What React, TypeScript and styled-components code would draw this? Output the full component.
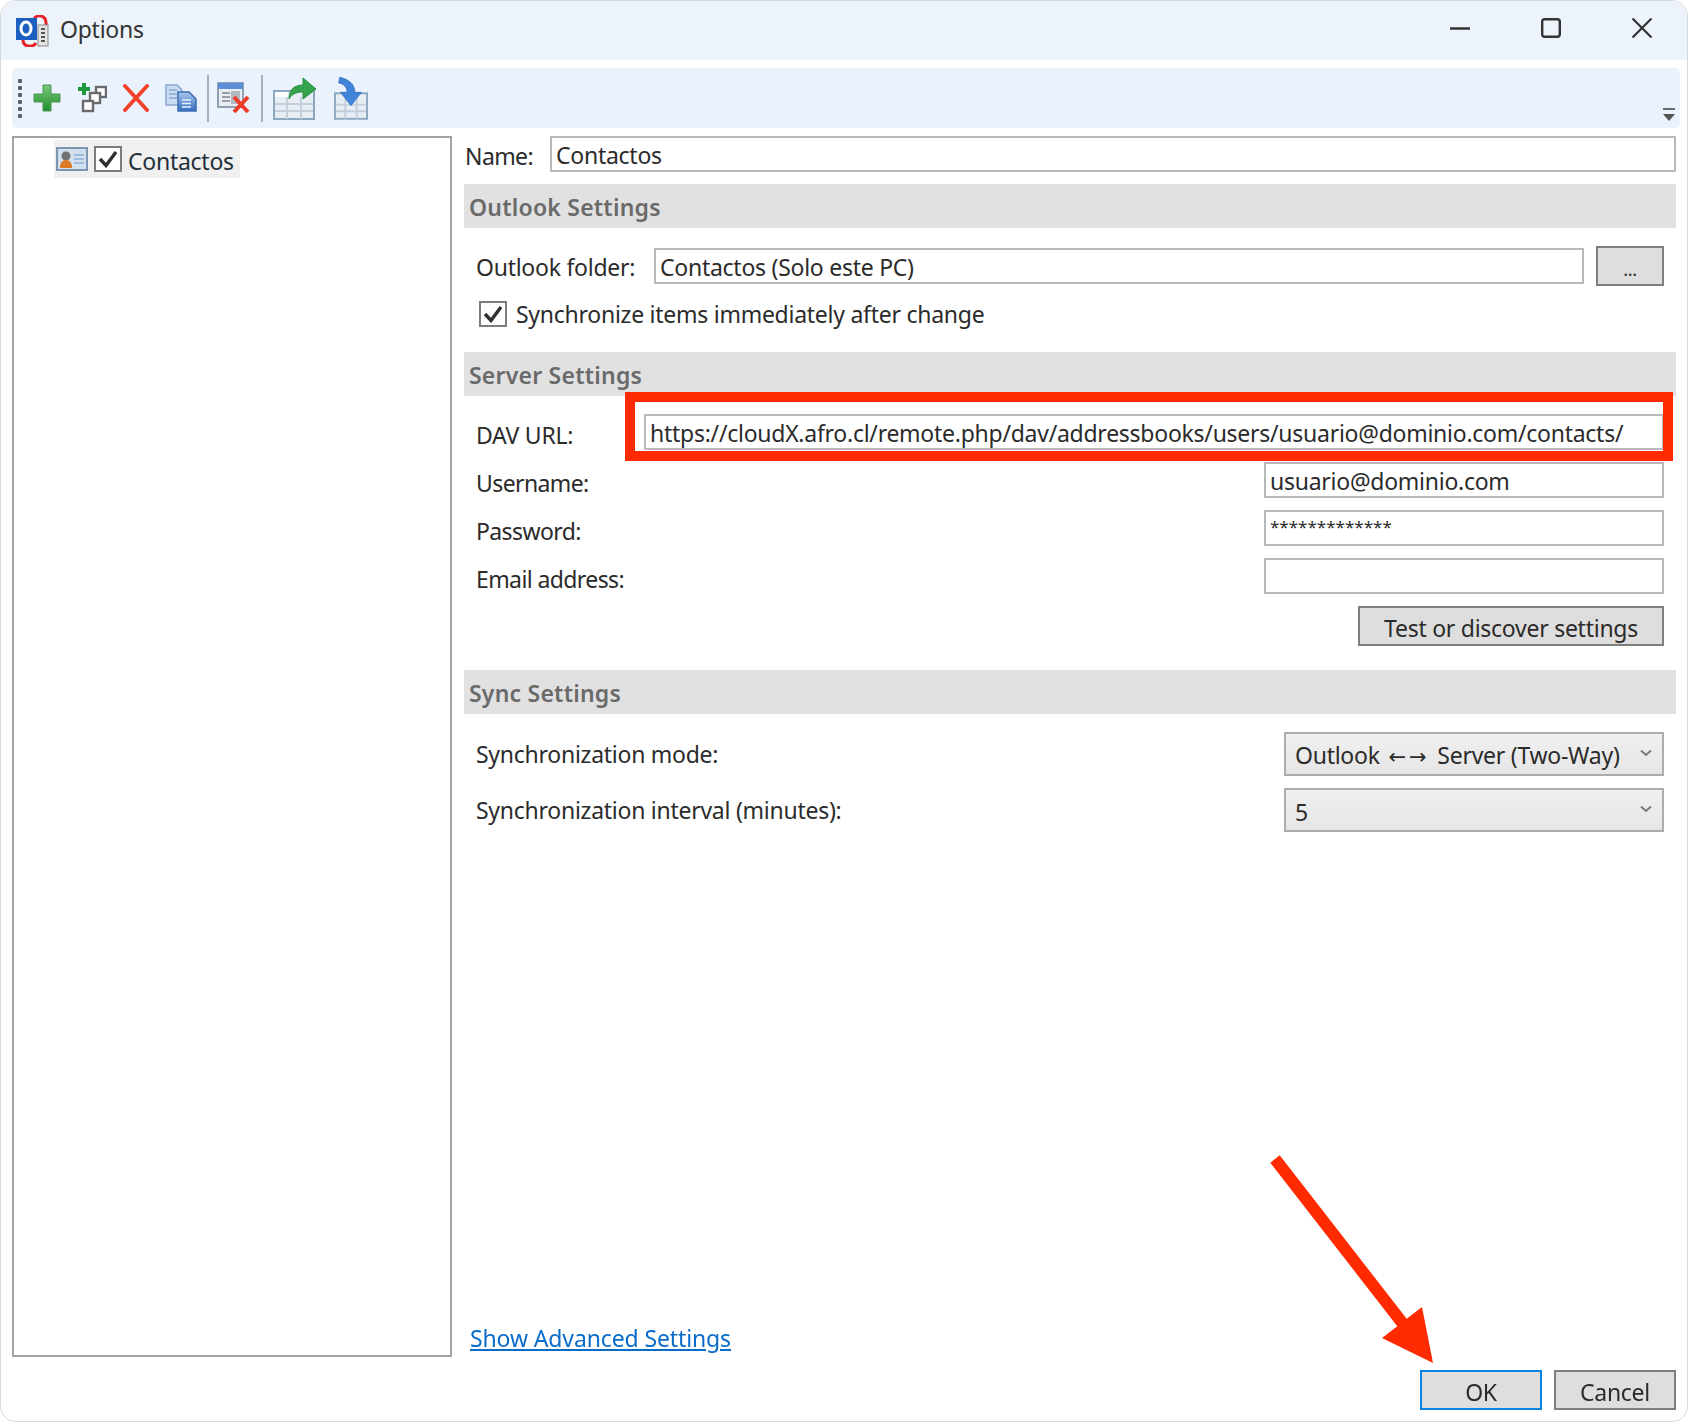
import React from 'react';
import styled, { createGlobalStyle } from 'styled-components';

const GlobalStyle = createGlobalStyle`
  html, body {
    margin: 0;
    padding: 0;
    background: #ffffff;
  }
  * {
    box-sizing: border-box;
  }
`;

const Window = styled.div`
  position: relative;
  display: flex;
  flex-direction: column;
  width: 1688px;
  height: 1422px;
  overflow: hidden;
  background: #ffffff;
  border: 1px solid #d8d9dc;
  border-radius: 16px;
  font-family: 'Noto Sans', 'Open Sans', sans-serif;
  font-size: 23px;
  line-height: 26px;
  letter-spacing: -0.26px;
  color: #2b2b2b;
  filter: blur(0.6px);
`;

const TitleBar = styled.div`
  display: flex;
  align-items: center;
  height: 59px;
  padding: 0 35px 0 15px;
  background: #edf3fa;
`;

const Title = styled.span`
  margin: 0 0 4px 11px;
  color: #333333;
`;

const WinControls = styled.div`
  display: flex;
  align-items: center;
  gap: 71px;
  margin: 0 0 5px auto;
`;

const Toolbar = styled.div`
  display: flex;
  align-items: center;
  height: 60px;
  margin: 8px 7px 0 11px;
  padding: 0 4px 0 6px;
  background: #eaf3fd;
  border-radius: 5px;
`;

const Grip = styled.div`
  display: flex;
  flex-direction: column;
  gap: 3px;
  width: 4px;
  margin-right: 3px;
`;

const GripDot = styled.span`
  width: 4px;
  height: 4px;
  background: #5c6167;
  border-radius: 1px;
`;

const Tool = styled.span<{ $w: number }>`
  display: flex;
  align-items: center;
  justify-content: center;
  width: ${p => p.$w}px;
`;

const ToolSeparator = styled.span`
  width: 2px;
  height: 47px;
  margin-left: 2px;
  background: #a9afb6;
`;

const Overflow = styled.span`
  display: flex;
  align-self: flex-end;
  margin: 0 0 7px auto;
`;

const Main = styled.div`
  display: flex;
  gap: 12px;
  height: 1221px;
  margin-top: 8px;
  padding: 0 11px 0 11px;
`;

const TreePanel = styled.div`
  flex: none;
  width: 440px;
  padding: 2px 0 0 40px;
  border: 2px solid #a3a3a6;
  background: #ffffff;
`;

const TreeItem = styled.div`
  display: flex;
  align-items: center;
  width: 186px;
  height: 38px;
  padding-left: 2px;
  background: #f0f0f0;
`;

const TreeCheck = styled.span`
  display: flex;
  margin-left: 6px;
`;

const TreeText = styled.span`
  margin-left: 6px;
  padding-top: 4px;
  color: #22303c;
`;

const Pane = styled.div`
  display: flex;
  flex: 1;
  flex-direction: column;
  min-width: 0;
`;

const NameRow = styled.div`
  display: flex;
  align-items: center;
  height: 36px;
  padding-left: 1px;
`;

const NameLabel = styled.span`
  width: 85px;
  padding-top: 4px;
  letter-spacing: -0.6px;
`;

const TextBox = styled.div<{ $w?: number }>`
  display: flex;
  flex: ${p => (p.$w ? 'none' : '1')};
  align-items: center;
  width: ${p => (p.$w ? `${p.$w}px` : 'auto')};
  height: 36px;
  padding: 2px 0 0 4px;
  background: #ffffff;
  border: 2px solid #b9b9bd;
  white-space: nowrap;
  overflow: hidden;
`;

const Stars = styled.span`
  align-self: flex-start;
  font-size: 17px;
  letter-spacing: 0;
  line-height: 26px;
`;

const SectionHeader = styled.div<{ $top?: number }>`
  display: flex;
  align-items: center;
  height: 44px;
  margin-top: ${p => p.$top || 0}px;
  padding: 2px 0 0 5px;
  background: #e1e1e1;
  color: #6a6a6a;
  font-weight: 600;
  letter-spacing: 0.22px;
`;

const SectionBody = styled.div<{ $gap: number; $bottom: number }>`
  display: flex;
  flex-direction: column;
  gap: ${p => p.$gap}px;
  padding: 18px 12px ${p => p.$bottom}px;
`;

const FormRow = styled.div`
  display: flex;
  align-items: center;
  justify-content: space-between;
`;

const FieldLabel = styled.span<{ $shift?: number; $tight?: boolean }>`
  padding-top: ${p => p.$shift || 0}px;
  letter-spacing: ${p => (p.$tight ? '-0.6px' : 'inherit')};
`;

const FolderPicker = styled.div`
  display: flex;
  align-items: center;
  gap: 12px;
`;

const CheckRow = styled.div`
  display: flex;
  align-items: center;
  gap: 9px;
  height: 27px;
  padding-left: 3px;
`;

const CheckBox = styled.span`
  display: flex;
  flex: none;
  align-items: center;
  justify-content: center;
  width: 28px;
  height: 26px;
  background: #ffffff;
  border: 2px solid #7c7c7c;
`;

const Button = styled.div<{ $w: number; $primary?: boolean }>`
  display: flex;
  flex: none;
  align-items: center;
  justify-content: center;
  width: ${p => p.$w}px;
  height: 40px;
  padding-top: 3px;
  background: #dedede;
  border: 2px solid ${p => (p.$primary ? '#0a84e0' : '#7e7e7e')};
`;

const EllipsisButton = styled(Button)`
  padding-top: 6px;
  font-size: 18px;
`;

const Select = styled.div`
  display: flex;
  align-items: center;
  justify-content: space-between;
  width: 380px;
  height: 44px;
  padding: 0 10px 2px 9px;
  background: linear-gradient(#f0f0f0, #e6e6e6);
  border: 2px solid #adadad;
`;

const SelectValue = styled.span`
  padding-top: 6px;
`;

const Arrows = styled.span`
  margin: 0 2px 0 3px;
  font-family: 'DejaVu Sans', sans-serif;
  font-size: 21px;
  letter-spacing: 3px;
`;

const AdvancedLink = styled.a`
  align-self: flex-start;
  margin: auto 0 6px 6px;
  color: #0a6cc9;
  letter-spacing: -0.12px;
  text-decoration: underline;
  cursor: pointer;
`;

const Footer = styled.div`
  display: flex;
  justify-content: flex-end;
  gap: 12px;
  margin-top: 13px;
  padding-right: 11px;
`;

const RedFrame = styled.div`
  position: absolute;
  top: 391px;
  left: 624px;
  width: 1048px;
  height: 69px;
  border: 10px solid #ff2a00;
  pointer-events: none;
`;

const ArrowOverlay = styled.svg`
  position: absolute;
  top: 1150px;
  left: 1260px;
  pointer-events: none;
`;

function AppIcon() {
  return (
    <svg width="33" height="32" viewBox="0 0 33 32">
      <path d="M18 4 C20 -1 31 -1 30 10" fill="none" stroke="#e8202a" strokeWidth="3" />
      <path d="M7 25 C7 32 17 33 20 28" fill="none" stroke="#e8202a" strokeWidth="3" />
      <rect x="0" y="3" width="21" height="22" fill="#1c5fc0" />
      <ellipse cx="10" cy="13.500" rx="5" ry="6.500" fill="none" stroke="#ffffff" strokeWidth="3" />
      <rect x="22" y="10" width="10" height="21" fill="#e4e4e4" stroke="#8a8a8a" />
      <path d="M25 14h4M25 18h4M25 22h4M25 26h4" stroke="#555555" strokeWidth="2" />
    </svg>
  );
}

function MinimizeIcon() {
  return (
    <svg width="20" height="20" viewBox="0 0 20 20">
      <path d="M0 10.500h20" stroke="#333333" strokeWidth="2.400" />
    </svg>
  );
}

function MaximizeIcon() {
  return (
    <svg width="20" height="20" viewBox="0 0 20 20">
      <rect x="1.200" y="1.200" width="17.600" height="17.600" rx="2.500" fill="none" stroke="#333333" strokeWidth="2.400" />
    </svg>
  );
}

function CloseIcon() {
  return (
    <svg width="20" height="20" viewBox="0 0 20 20">
      <path d="M0.500 0.500l19 19M19.500 0.500l-19 19" stroke="#333333" strokeWidth="2.200" />
    </svg>
  );
}

function PlusIcon() {
  return (
    <svg width="28" height="28" viewBox="0 0 28 28">
      <defs>
        <linearGradient id="plusFill" x1="0" y1="0" x2="0" y2="1">
          <stop offset="0" stopColor="#78c878" />
          <stop offset="1" stopColor="#1f8f2e" />
        </linearGradient>
      </defs>
      <path d="M10 1h8v9h9v8h-9v9h-8v-9H1v-8h9z" fill="url(#plusFill)" stroke="#4a9454" />
    </svg>
  );
}

function AddCopyIcon() {
  return (
    <svg width="30" height="30" viewBox="0 0 30 30">
      <rect x="19" y="4" width="10" height="10" fill="#ffffff" stroke="#6a6a6a" strokeWidth="2.400" />
      <rect x="13" y="10" width="10" height="10" fill="#ffffff" stroke="#6a6a6a" strokeWidth="2.400" />
      <rect x="6" y="18" width="10" height="10" fill="#ffffff" stroke="#6a6a6a" strokeWidth="2.400" />
      <path d="M5 0h4v4h4v4H9v4H5V8H1V4h4z" fill="#1f9a3a" />
    </svg>
  );
}

function RemoveIcon() {
  return (
    <svg width="26" height="28" viewBox="0 0 26 28">
      <path d="M2 2l22 24M24 2L2 26" stroke="#f2402a" strokeWidth="3.800" strokeLinecap="round" />
    </svg>
  );
}

function CopyIcon() {
  return (
    <svg width="32" height="28" viewBox="0 0 32 28">
      <defs>
        <linearGradient id="copyFill" x1="0" y1="0" x2="0" y2="1">
          <stop offset="0" stopColor="#a8c6ec" />
          <stop offset="1" stopColor="#3570c4" />
        </linearGradient>
      </defs>
      <path d="M1 1h11l5 5v15H1z" fill="#c9dcf2" stroke="#8aa7cf" strokeWidth="1.500" />
      <path d="M4 6h8M4 10h8M4 14h8" stroke="#8aa7cf" strokeWidth="1.500" />
      <path d="M13 8h11l7 7v12H13z" fill="url(#copyFill)" stroke="#3c6bb0" strokeWidth="1.500" />
      <path d="M17 16h9M17 19.500h9M17 23h9" stroke="#e6eff9" strokeWidth="1.600" />
    </svg>
  );
}

function ClearIcon() {
  return (
    <svg width="34" height="32" viewBox="0 0 34 32">
      <rect x="1" y="1" width="25" height="24" fill="#e8edf3" stroke="#7a8da3" strokeWidth="1.600" />
      <rect x="1" y="1" width="25" height="6" fill="#5b90d6" />
      <path d="M5 11h8M5 15h8M5 19h8" stroke="#9a9ea3" strokeWidth="2" />
      <rect x="14" y="9" width="9" height="13" fill="#b4b9bf" />
      <path d="M17 15l14 15M31 15L17 30" stroke="#ef3a2a" strokeWidth="4" />
    </svg>
  );
}

function ExportIcon() {
  return (
    <svg width="44" height="43" viewBox="0 0 44 43">
      <rect x="1" y="14" width="40" height="28" fill="#e6edf4" stroke="#8aa6c0" strokeWidth="2" />
      <path d="M2 15h13v5H2z" fill="#ffffff" />
      <path d="M2 27h38M2 34h38M14 20v22M28 20v22" stroke="#c3ced9" strokeWidth="2" />
      <path d="M16 22c0-10 6-14 14-14V1l13 11-13 10v-7c-7 0-11 2-14 7z" fill="#35a24e" stroke="#2c8f43" />
    </svg>
  );
}

function ImportIcon() {
  return (
    <svg width="34" height="43" viewBox="0 0 36 45">
      <rect x="1" y="17" width="34" height="27" fill="#e6edf4" stroke="#8aa6c0" strokeWidth="2" />
      <path d="M2 29h32M2 36h32M12 22v22M24 22v22" stroke="#c3ced9" strokeWidth="2" />
      <path d="M6 0C14 2 22 6 22 16h7L18 30 7 16h7c0-6-4-9-9-10z" fill="#4284da" stroke="#3a74c4" />
    </svg>
  );
}

function ContactIcon() {
  return (
    <svg width="32" height="24" viewBox="0 0 32 24">
      <rect x="1" y="1" width="30" height="22" fill="#d3e1ee" stroke="#7a96b2" strokeWidth="2" />
      <circle cx="10" cy="9" r="4.500" fill="#6f7173" />
      <path d="M4 21c0-6 3-8 6-8s6 2 6 8z" fill="#dd7a24" />
      <path d="M18 8h10M18 12h10M18 16h10" stroke="#9abce0" strokeWidth="2" />
    </svg>
  );
}

function CheckMark() {
  return (
    <svg width="20" height="18" viewBox="0 0 20 18">
      <path d="M2 9l6 6.500L18 2" fill="none" stroke="#2f2f2f" strokeWidth="3.400" />
    </svg>
  );
}

function Chevron() {
  return (
    <svg width="12" height="8" viewBox="0 0 12 8">
      <path d="M1 1.500l5 4.500 5-4.500" fill="none" stroke="#777777" strokeWidth="2" />
    </svg>
  );
}

function OverflowGlyph() {
  return (
    <svg width="14" height="13" viewBox="0 0 14 13">
      <path d="M1 1h12" stroke="#6a6a6a" strokeWidth="2" />
      <path d="M1 6h12l-6 7z" fill="#555555" />
    </svg>
  );
}

function App(): JSX.Element {
  const gripDots = [0, 1, 2, 3, 4, 5];

  return (
    <>
      <GlobalStyle />
      <Window>
        <TitleBar>
          <AppIcon />
          <Title>Options</Title>
          <WinControls>
            <MinimizeIcon />
            <MaximizeIcon />
            <CloseIcon />
          </WinControls>
        </TitleBar>

        <Toolbar>
          <Grip>
            {gripDots.map(dot => (
              <GripDot key={dot} />
            ))}
          </Grip>
          <Tool $w={44}>
            <PlusIcon />
          </Tool>
          <Tool $w={46}>
            <AddCopyIcon />
          </Tool>
          <Tool $w={42}>
            <RemoveIcon />
          </Tool>
          <Tool $w={48}>
            <CopyIcon />
          </Tool>
          <ToolSeparator />
          <Tool $w={50}>
            <ClearIcon />
          </Tool>
          <ToolSeparator />
          <Tool $w={63}>
            <ExportIcon />
          </Tool>
          <Tool $w={49}>
            <ImportIcon />
          </Tool>
          <Overflow>
            <OverflowGlyph />
          </Overflow>
        </Toolbar>

        <Main>
          <TreePanel>
            <TreeItem>
              <ContactIcon />
              <TreeCheck>
                <CheckBox>
                  <CheckMark />
                </CheckBox>
              </TreeCheck>
              <TreeText>Contactos</TreeText>
            </TreeItem>
          </TreePanel>

          <Pane>
            <NameRow>
              <NameLabel>Name:</NameLabel>
              <TextBox>Contactos</TextBox>
            </NameRow>

            <SectionHeader $top={12}>Outlook Settings</SectionHeader>
            <SectionBody $gap={14} $bottom={25}>
              <FormRow>
                <FieldLabel $shift={2}>Outlook folder:</FieldLabel>
                <FolderPicker>
                  <TextBox $w={930}>Contactos (Solo este PC)</TextBox>
                  <EllipsisButton $w={68}>...</EllipsisButton>
                </FolderPicker>
              </FormRow>
              <CheckRow>
                <CheckBox>
                  <CheckMark />
                </CheckBox>
                <span>Synchronize items immediately after change</span>
              </CheckRow>
            </SectionBody>

            <SectionHeader>Server Settings</SectionHeader>
            <SectionBody $gap={12} $bottom={24}>
              <FormRow>
                <FieldLabel $shift={6}>DAV URL:</FieldLabel>
                <TextBox $w={1020}>https://cloudX.afro.cl/remote.php/dav/addressbooks/users/usuario@dominio.com/contacts/</TextBox>
              </FormRow>
              <FormRow>
                <FieldLabel $shift={6} $tight>
                  Username:
                </FieldLabel>
                <TextBox $w={400}>usuario@dominio.com</TextBox>
              </FormRow>
              <FormRow>
                <FieldLabel $shift={6} $tight>
                  Password:
                </FieldLabel>
                <TextBox $w={400}>
                  <Stars>*************</Stars>
                </TextBox>
              </FormRow>
              <FormRow>
                <FieldLabel $shift={6} $tight>
                  Email address:
                </FieldLabel>
                <TextBox $w={400} />
              </FormRow>
              <FormRow>
                <span />
                <Button $w={306}>Test or discover settings</Button>
              </FormRow>
            </SectionBody>

            <SectionHeader>Sync Settings</SectionHeader>
            <SectionBody $gap={12} $bottom={0}>
              <FormRow>
                <span>Synchronization mode:</span>
                <Select>
                  <SelectValue>
                    Outlook <Arrows>←→</Arrows> Server (Two-Way)
                  </SelectValue>
                  <Chevron />
                </Select>
              </FormRow>
              <FormRow>
                <span>Synchronization interval (minutes):</span>
                <Select>
                  <SelectValue>5</SelectValue>
                  <Chevron />
                </Select>
              </FormRow>
            </SectionBody>

            <AdvancedLink>Show Advanced Settings</AdvancedLink>
          </Pane>
        </Main>

        <Footer>
          <Button $w={122} $primary>
            OK
          </Button>
          <Button $w={122}>Cancel</Button>
        </Footer>

        <RedFrame />
        <ArrowOverlay width="190" height="225" viewBox="0 0 190 225">
          <path d="M18.700 4.300L145.700 167.800L161 156L172 212L121 187L136.300 175.200L9.300 11.700z" fill="#ff2a00" />
        </ArrowOverlay>
      </Window>
    </>
  );
}

export default App;
